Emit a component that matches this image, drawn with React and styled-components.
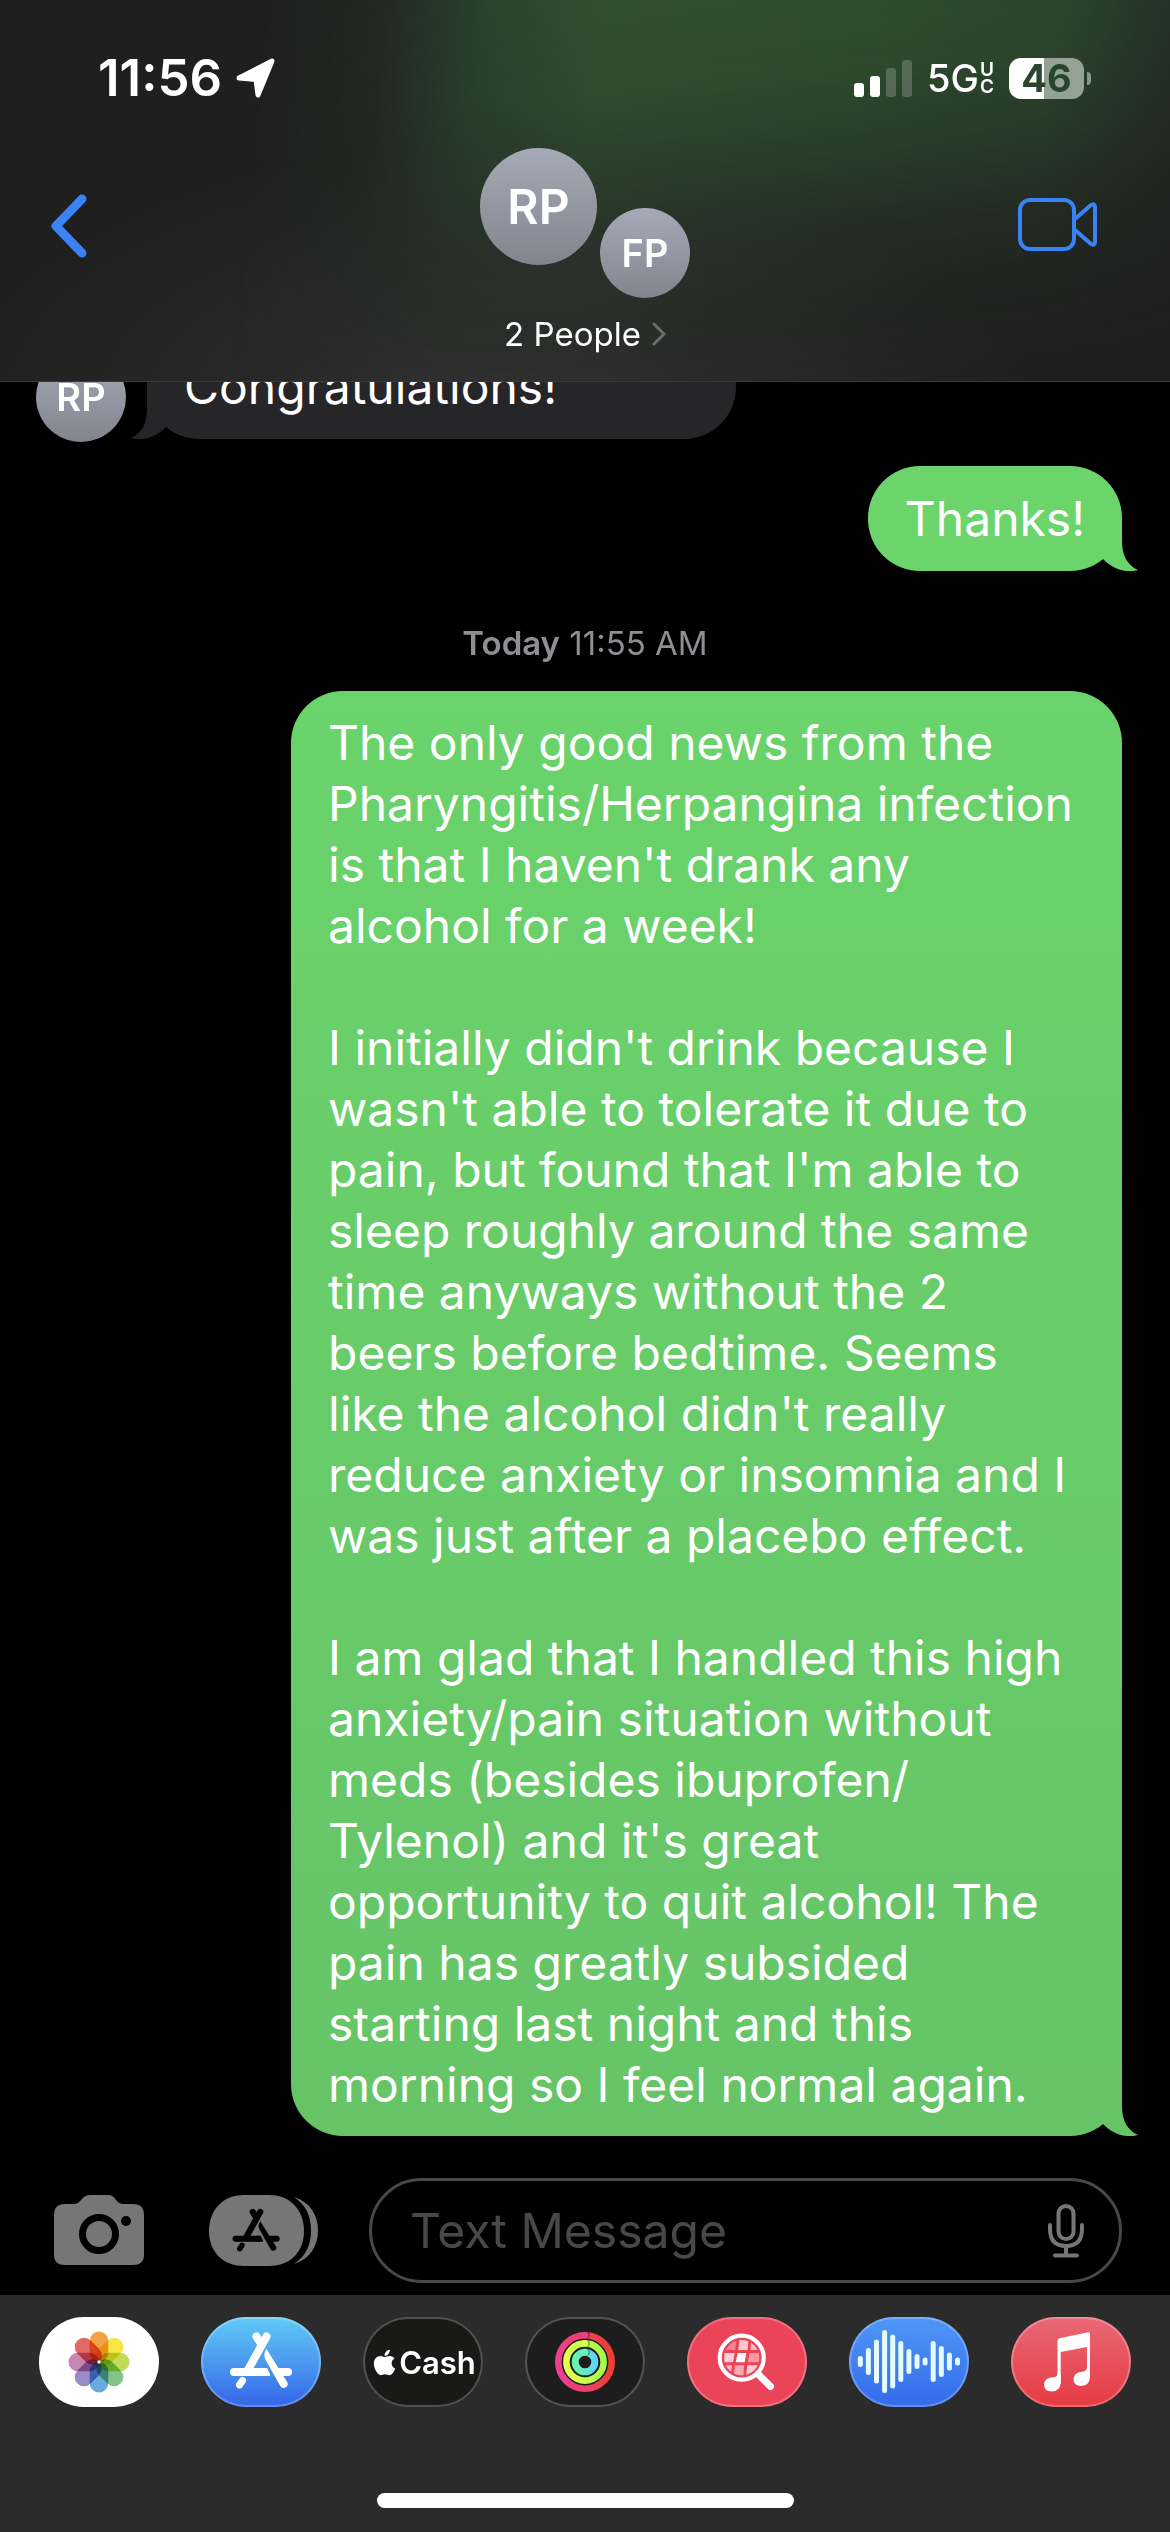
import React from "react";
import styled, { createGlobalStyle } from "styled-components";
import { FaApple } from "react-icons/fa";

const GlobalStyle = createGlobalStyle`
  *, *::before, *::after { box-sizing: border-box; }
  body {
    margin: 0;
    background: #000;
    color: #fff;
    font-family: Inter, "Liberation Sans", sans-serif;
    -webkit-font-smoothing: antialiased;
  }
  p { margin: 0; }
`;

const Screen = styled.div`
  display: flex;
  flex-direction: column;
  height: 100vh;
`;

/* ---------- header ---------- */

const Header = styled.header`
  position: relative;
  isolation: isolate;
  flex: none;
  padding-bottom: 27px;
  border-bottom: 1px solid #3a3a3a;
  background:
    radial-gradient(ellipse 46% 70% at 42% 108%, rgba(49, 49, 49, 0.95) 0%, rgba(47, 47, 47, 0.6) 45%, rgba(45, 45, 45, 0) 100%),
    #1f1f1f;

  /* green glow of the sent messages behind the translucent bar */
  &::before {
    content: "";
    position: absolute;
    inset: 0;
    z-index: -1;
    background: linear-gradient(
      96deg,
      rgba(36, 52, 40, 0) 22%,
      rgba(38, 56, 41, 0.45) 32%,
      rgba(44, 72, 46, 0.9) 40%,
      #335233 50%,
      #2f5030 72%,
      #2c492e 88%,
      rgba(38, 56, 41, 0.8) 97%,
      rgba(36, 50, 40, 0.7) 100%
    );
    mask-image: linear-gradient(175deg, #000 0%, rgba(0, 0, 0, 0.86) 30%, rgba(0, 0, 0, 0.62) 46%, rgba(0, 0, 0, 0.3) 62%, rgba(0, 0, 0, 0.08) 80%, transparent 96%);
  }
`;

const StatusBar = styled.div`
  display: flex;
  align-items: center;
  justify-content: space-between;
  padding: 48px 79px 40px 98px;
  line-height: 60px;
`;

const StatusGroup = styled.div`
  display: flex;
  align-items: center;
  gap: ${(p) => p.$gap}px;
`;

const Clock = styled.time`
  font-size: 51px;
  font-weight: 600;
`;

const Network = styled.span`
  display: flex;
  align-items: center;
  gap: 1px;
  font-size: 38px;
  font-weight: 500;
`;

const NetworkSuffix = styled.span`
  display: flex;
  flex-direction: column;
  font-size: 19px;
  font-weight: 600;
  line-height: 17px;
`;

const Battery = styled.span`
  display: flex;
  align-items: center;
  gap: 3px;
`;

const BatteryBody = styled.span`
  width: 75px;
  border-radius: 12px;
  background: linear-gradient(to right, #fff 47%, #93a294 47%);
  color: #29452b;
  font-size: 38px;
  font-weight: 700;
  line-height: 41px;
  text-align: center;
`;

const BatteryTip = styled.span`
  width: 4px;
  height: 13px;
  border-radius: 0 6px 6px 0;
  background: #8a968b;
`;

const Nav = styled.nav`
  display: grid;
  grid-template-columns: 1fr auto 1fr;
  align-items: start;
  padding: 0 72px 0 50px;
`;

const IconButton = styled.button`
  display: flex;
  align-items: center;
  justify-self: ${(p) => p.$side || "start"};
  height: ${(p) => p.$height || "auto"};
  padding: 0;
  border: 0;
  background: none;
  color: ${(p) => p.$color || "#3b82f7"};
`;

const Contact = styled.button`
  display: flex;
  flex-direction: column;
  align-items: center;
  gap: 16px;
  padding: 0;
  margin-left: 22px;
  border: 0;
  background: none;
  color: #fff;
  font: inherit;
`;

const AvatarGroup = styled.span`
  display: flex;
  align-items: flex-end;
  gap: 3px;
  height: 150px;
`;

const Avatar = styled.span`
  display: flex;
  align-items: center;
  justify-content: center;
  flex: none;
  width: ${(p) => (p.$large ? 117 : 90)}px;
  height: ${(p) => (p.$large ? 117 : 90)}px;
  align-self: ${(p) => (p.$large ? "flex-start" : "flex-end")};
  margin-bottom: ${(p) => (p.$inThread ? "-3px" : "0")};
  border-radius: 50%;
  background: linear-gradient(#a6aab6, #82858e);
  color: #fff;
  font-size: ${(p) => (p.$large ? 48 : 38)}px;
  font-weight: 600;
`;

const ContactLabel = styled.span`
  display: flex;
  align-items: center;
  gap: 11px;
  font-size: 33px;
  line-height: 40px;
`;

/* ---------- thread ---------- */

const Thread = styled.main`
  display: flex;
  flex: 1;
  flex-direction: column;
  justify-content: flex-end;
  min-height: 0;
  overflow: hidden;
  padding: 0 48px 0 36px;
`;

const MessageRow = styled.div`
  display: flex;
  flex: none;
  align-items: flex-end;
  justify-content: ${(p) => (p.$sent ? "flex-end" : "flex-start")};
  gap: 21px;
  margin-bottom: ${(p) => p.$after || 0}px;
`;

const BubbleBox = styled.div`
  position: relative;
  display: flex;
  flex-direction: column;
  justify-content: center;
  gap: 61px;
  min-width: ${(p) => p.$minWidth || 0}px;
  max-width: 831px;
  min-height: 105px;
  padding: 21px 37px;
  border-radius: 52px;
  background: linear-gradient(${(p) => p.$from}, ${(p) => p.$to});
  font-size: 48px;
  line-height: 61px;
`;

const Tail = styled.svg`
  position: absolute;
  bottom: 0;
  ${(p) => (p.$sent ? "right: -16px;" : "left: -16px; transform: scaleX(-1);")}
`;

const Timestamp = styled.p`
  flex: none;
  padding: 52px 0 28px 12px;
  color: #8e8e93;
  font-size: 33px;
  line-height: 40px;
  text-align: center;

  strong { font-weight: 600; }
`;

/* ---------- composer ---------- */

const Composer = styled.form`
  display: flex;
  flex: none;
  align-items: center;
  padding: 42px 48px 12px 54px;
`;

const ComposerTools = styled.div`
  display: flex;
  align-items: center;
  gap: 65px;
  margin-right: 51px;
`;

const Field = styled.label`
  display: flex;
  flex: 1;
  align-items: center;
  min-width: 0;
  height: 105px;
  padding: 0 35px 0 38px;
  border: 3px solid #48484a;
  border-radius: 53px;
`;

const FieldInput = styled.input`
  flex: 1;
  min-width: 0;
  padding: 0;
  border: 0;
  outline: 0;
  background: none;
  color: #fff;
  font-family: inherit;
  font-size: 48px;
  line-height: 61px;

  &::placeholder { color: #48484a; opacity: 1; }
`;

/* ---------- app drawer ---------- */

const Drawer = styled.footer`
  display: flex;
  flex: none;
  flex-direction: column;
  align-items: center;
  gap: 86px;
  padding: 22px 39px 24px;
  background: #2b2b2b;
`;

const AppStrip = styled.div`
  display: flex;
  justify-content: space-between;
  width: 100%;
`;

const AppButton = styled.button`
  display: flex;
  align-items: center;
  justify-content: center;
  width: 120px;
  height: 90px;
  padding: 0;
  border: 0;
  border-radius: 45px;
  background: ${(p) => p.$fill};
  box-shadow: inset 0 0 0 2px rgba(255, 255, 255, 0.24);
  color: #fff;
  font-family: inherit;
  font-size: 31px;
  font-weight: 600;
`;

const HomeIndicator = styled.div`
  width: 417px;
  height: 15px;
  border-radius: 8px;
  background: #fff;
`;

/* ---------- drawings ---------- */

const LocationIcon = () => (
  <svg width="40" height="40" viewBox="0 0 40 40" aria-hidden="true">
    <path d="M3 20 L36 3 L22 37 L20 21.500 Z" fill="#fff" stroke="#fff" strokeWidth="5" strokeLinejoin="round" />
  </svg>
);

const SignalIcon = () => (
  <svg width="58" height="37" viewBox="0 0 58 37" fill="#fff" aria-hidden="true">
    <rect x="0" y="23" width="10" height="14" rx="3" />
    <rect x="16" y="16" width="10" height="21" rx="3" />
    <rect x="32" y="8" width="10" height="29" rx="3" opacity="0.2" />
    <rect x="48" y="0" width="10" height="37" rx="3" opacity="0.2" />
  </svg>
);

const BackIcon = () => (
  <svg width="38" height="64" viewBox="0 0 38 64" aria-hidden="true">
    <path d="M32 5 L6 32 L32 59" fill="none" stroke="currentColor" strokeWidth="9" strokeLinecap="round" strokeLinejoin="round" />
  </svg>
);

const VideoIcon = () => (
  <svg width="80" height="54" viewBox="0 0 80 54" fill="none" stroke="currentColor" strokeWidth="4" strokeLinejoin="round" aria-hidden="true">
    <rect x="2" y="2" width="54" height="49" rx="10" />
    <path d="M57 21 L73 7 Q77 5 77 9 V44 Q77 48 73 46 L57 32" />
  </svg>
);

const ChevronIcon = () => (
  <svg width="14" height="24" viewBox="0 0 14 24" aria-hidden="true">
    <path d="M2 2 L12 12 L2 22" fill="none" stroke="#6c6e6c" strokeWidth="3" strokeLinecap="round" strokeLinejoin="round" />
  </svg>
);

const CameraIcon = () => (
  <svg width="90" height="71" viewBox="0 0 90 71" aria-hidden="true">
    <path
      d="M11 9 H20 Q24 9 27 5 Q31 0 36 0 H54 Q59 0 62 5 Q65 9 69 9 H79 Q90 9 90 20 V60 Q90 70 79 70 H11 Q0 70 0 60 V20 Q0 9 11 9 Z"
      fill="currentColor"
    />
    <circle cx="45" cy="39" r="16.500" fill="none" stroke="#000" strokeWidth="7" />
    <circle cx="72" cy="26" r="5" fill="#000" />
  </svg>
);

const StoreGlyph = ({ color }) => (
  <g fill="none" stroke={color} strokeWidth="8" strokeLinecap="round">
    <path d="M65.500 19.500 L47 53" />
    <path d="M55.500 19.500 L60 27" />
    <path d="M33 55 H63" />
    <path d="M60 51 H66 L69 57 V59 H60 Z" fill={color} stroke="none" />
    <path d="M78 55 H87" />
    <path d="M41.500 63.500 L38.500 68" strokeWidth="7" />
    <path d="M65.500 32 C62.800 35.500 62.600 39 64.600 43 L79.300 69 A4 4 0 0 0 86.200 65 Z" fill={color} stroke="none" />
  </g>
);

const AppsIcon = () => (
  <svg width="109" height="72" viewBox="0 0 109 72" aria-hidden="true">
    <path
      d="M35 0 H60 C82 0 95 16 95 36 C95 56 82 71 60 71 H35 C13 71 0 56 0 36 C0 16 13 0 35 0 Z"
      fill="currentColor"
    />
    <path d="M85 2 C101 7 109 20 109 35.500 C109 51 101 64 85 69 C97 61 102 50 102 35.500 C102 21 97 10 85 2 Z" fill="currentColor" />
    <g transform="translate(1.500 2) scale(0.760)">
      <StoreGlyph color="#000" />
    </g>
  </svg>
);

const MicIcon = () => (
  <svg width="36" height="54" viewBox="0 0 36 54" fill="none" stroke="#767678" strokeWidth="4" strokeLinecap="round" aria-hidden="true">
    <rect x="10.500" y="2" width="15" height="33" rx="7.500" />
    <path d="M2 21 V25 Q2 42 18 42 Q34 42 34 25 V21" />
    <path d="M18 42 V51 M7 51.500 H29" />
  </svg>
);

const AppArt = ({ children }) => (
  <svg width="120" height="90" viewBox="0 0 120 90" aria-hidden="true">
    {children}
  </svg>
);

const petals = ["#f2a145", "#f6e545", "#c2dc58", "#83c588", "#6aaade", "#988cc8", "#c886b2", "#e36964"];

const Petal = styled.rect`
  mix-blend-mode: multiply;
`;

const Flower = styled.g`
  isolation: isolate;
`;

const PhotosArt = () => (
  <AppArt>
    <Flower>
      {petals.map((fill, i) => (
        <Petal
          key={fill}
          x="50.700"
          y="14.500"
          width="18.600"
          height="30.500"
          rx="9.300"
          fill={fill}
          transform={`rotate(${i * 45} 60 45)`}
        />
      ))}
    </Flower>
    <circle cx="60" cy="45" r="1.800" fill="#fff" />
  </AppArt>
);

const rings = [
  { id: "move", r: 26.7, w: 6.6, from: "#ea3f92", to: "#ee4030" },
  { id: "exercise", r: 18.6, w: 6.6, from: "#e2ff50", to: "#a4f94b" },
  { id: "stand", r: 9.8, w: 7, from: "#69f5ac", to: "#62d4fa" },
];

const FitnessArt = () => (
  <AppArt>
    <defs>
      {rings.map((ring) => (
        <linearGradient key={ring.id} id={ring.id} x1="0" x2="1" y1="0.300" y2="0.200">
          <stop offset="0" stopColor={ring.from} />
          <stop offset="1" stopColor={ring.to} />
        </linearGradient>
      ))}
    </defs>
    {rings.map((ring) => (
      <g key={ring.id}>
        <circle cx="60" cy="45" r={ring.r} fill="none" stroke={`url(#${ring.id})`} strokeWidth={ring.w} />
        <circle cx="61.500" cy={45 - ring.r} r={ring.w / 2} fill="#000" opacity="0.350" />
        <circle cx="60" cy={45 - ring.r} r={ring.w / 2} fill={ring.from} />
      </g>
    ))}
  </AppArt>
);

const tiles = [
  ["36,23 49.300,23 48.300,33 36,33", 0.35],
  ["52.300,23 61.300,23 60.700,33 51.300,33", 0.7],
  ["64.300,23 74,23 74,33 63.500,33", 0.65],
  ["36,36 47.700,36 46,45.300 36,45.300", 0.75],
  ["50.700,36 59.300,36 57.700,45.300 48.700,45.300", 1],
  ["62.500,36 74,36 74,45.300 61,45.300", 0.45],
  ["36,48.300 45,48.300 43.700,60 36,60", 0.65],
  ["48,48.300 57,48.300 56.300,60 46.700,60", 0.55],
  ["60.300,48.300 74,48.300 74,60 59,60", 0.75],
];

const SearchArt = () => (
  <AppArt>
    <defs>
      <clipPath id="lens">
        <circle cx="54.700" cy="40.700" r="17.600" />
      </clipPath>
    </defs>
    <g clipPath="url(#lens)" fill="#fff">
      {tiles.map(([points, opacity]) => (
        <polygon key={points} points={points} opacity={opacity} />
      ))}
    </g>
    <circle cx="54.700" cy="40.700" r="22" fill="none" stroke="#fff" strokeWidth="4.200" />
    <path d="M71 57 L83.500 69.500" stroke="#fff" strokeWidth="7" strokeLinecap="round" />
  </AppArt>
);

const bars = [11, 27, 44, 63, 54, 41, 25, 15, 8, 41, 31, 18, 8];

const AudioArt = () => (
  <AppArt>
    {bars.map((h, i) => (
      <rect key={i} x={8.8 + i * 8.1} y={44.5 - h / 2} width="5" height={h} rx="2.500" fill="#e4fbff" />
    ))}
  </AppArt>
);

const MusicArt = () => (
  <AppArt>
    <g fill="#fff">
      <path d="M46.500 24 Q46.500 21.800 48.700 21.300 L77 15.300 Q79 15 79 17 V61 H76 V30 L49.700 35 V67 H46.500 Z" />
      <path d="M49.700 58 V66 Q49 74.300 40.500 74.500 Q33 74 33 67.500 Q33.500 61.500 40 60.500 Q46 60.500 46.500 57 Z" />
      <path d="M79 52 V60 Q78.500 68.500 70 69 Q62.500 68.500 62.500 62 Q63 56 69.500 55 Q75.500 54.500 76 51 Z" />
    </g>
  </AppArt>
);

const apps = [
  { name: "Photos", fill: "#fff", art: <PhotosArt /> },
  { name: "App Store", fill: "linear-gradient(#61cbf6, #4e9ef0 45%, #3465e8)", art: <AppArt><StoreGlyph color="#fff" /></AppArt> },
  { name: "Apple Cash", fill: "#191917", art: <><FaApple size={29} aria-hidden="true" />Cash</> },
  { name: "Fitness", fill: "#1d1d1d", art: <FitnessArt /> },
  { name: "Images", fill: "#eb4458", art: <SearchArt /> },
  { name: "Audio", fill: "linear-gradient(#5097f7, #346aea)", art: <AudioArt /> },
  { name: "Music", fill: "linear-gradient(#ea6877, #e63a41)", art: <MusicArt /> },
];

const Bubble = ({ sent, from, to, minWidth, children }) => (
  <BubbleBox $from={from} $to={to} $minWidth={minWidth}>
    <Tail $sent={sent} width="52" height="52" viewBox="0 0 52 52" aria-hidden="true">
      <path d="M20 0 H36 V22 C36 36 41 46 52 51 C49 52 46 52 42 52 C32 52 23 46 17 40 V20 Z" fill={to} />
    </Tail>
    {children}
  </BubbleBox>
);

export default function App() {
  return (
    <Screen>
      <GlobalStyle />
      <Header>
        <StatusBar>
          <StatusGroup $gap={14}>
            <Clock>11:56</Clock>
            <LocationIcon />
          </StatusGroup>
          <StatusGroup $gap={15}>
            <SignalIcon />
            <Network>
              5G
              <NetworkSuffix>
                <span>U</span>
                <span>C</span>
              </NetworkSuffix>
            </Network>
            <Battery>
              <BatteryBody>46</BatteryBody>
              <BatteryTip />
            </Battery>
          </StatusGroup>
        </StatusBar>
        <Nav>
          <IconButton type="button" aria-label="Back" $height="156px">
            <BackIcon />
          </IconButton>
          <Contact type="button">
            <AvatarGroup>
              <Avatar $large>RP</Avatar>
              <Avatar>FP</Avatar>
            </AvatarGroup>
            <ContactLabel>
              2 People
              <ChevronIcon />
            </ContactLabel>
          </Contact>
          <IconButton type="button" aria-label="Video call" $side="end" $height="154px">
            <VideoIcon />
          </IconButton>
        </Nav>
      </Header>

      <Thread>
        <MessageRow $after={27}>
          <Avatar $inThread>RP</Avatar>
          <Bubble from="#262628" to="#262628" minWidth={589}>
            <p>Congratulations!</p>
          </Bubble>
        </MessageRow>
        <MessageRow $sent>
          <Bubble sent from="#6bd56b" to="#6bd46b">
            <p>Thanks!</p>
          </Bubble>
        </MessageRow>
        <Timestamp>
          <strong>Today</strong> 11:55 AM
        </Timestamp>
        <MessageRow $sent>
          <Bubble sent from="#6ad36b" to="#66c467">
            <p>
              The only good news from the Pharyngitis/Herpangina infection is that I haven't drank any alcohol for a
              week!
            </p>
            <p>
              I initially didn't drink because I wasn't able to tolerate it due to pain, but found that I'm able to
              sleep roughly around the same time anyways without the 2 beers before bedtime. Seems like the alcohol
              didn't really reduce anxiety or insomnia and I was just after a placebo effect.
            </p>
            <p>
              I am glad that I handled this high anxiety/pain situation without meds (besides ibuprofen/
              <wbr />
              Tylenol) and it's great opportunity to quit alcohol! The pain has greatly subsided starting last night
              and this morning so I feel normal again.
            </p>
          </Bubble>
        </MessageRow>
      </Thread>

      <Composer>
        <ComposerTools>
          <IconButton type="button" aria-label="Camera" $color="#767676">
            <CameraIcon />
          </IconButton>
          <IconButton type="button" aria-label="Apps" $color="#767676">
            <AppsIcon />
          </IconButton>
        </ComposerTools>
        <Field>
          <FieldInput type="text" placeholder="Text Message" aria-label="Text Message" />
          <MicIcon />
        </Field>
      </Composer>

      <Drawer>
        <AppStrip>
          {apps.map((app) => (
            <AppButton key={app.name} type="button" aria-label={app.name} $fill={app.fill}>
              {app.art}
            </AppButton>
          ))}
        </AppStrip>
        <HomeIndicator />
      </Drawer>
    </Screen>
  );
}
